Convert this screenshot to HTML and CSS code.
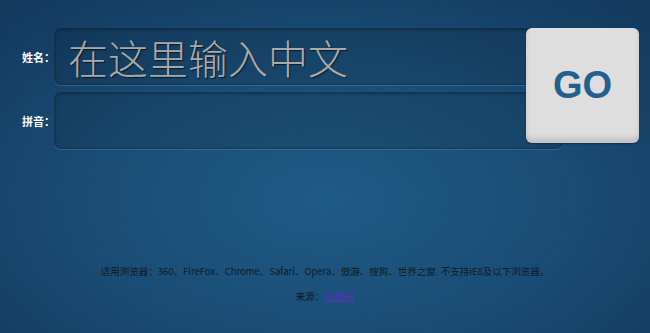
FILE: index.html
```html
<!DOCTYPE html>
<html lang="zh-CN">
<head>
<meta charset="utf-8">
<title>汉字转拼音</title>
<link rel="stylesheet" href="styles.css">
</head>
<body>
<div class="form">
  <div class="fields">
    <div class="row">
      <label class="label" for="cn">姓名：</label>
      <input class="field" id="cn" type="text" placeholder="在这里输入中文">
    </div>
    <div class="row">
      <label class="label" for="py">拼音：</label>
      <input class="field" id="py" type="text">
    </div>
  </div>
  <button class="go" type="button">GO</button>
</div>
<div class="footer">
  <p>适用浏览器：360、FireFox、Chrome、Safari、Opera、傲游、搜狗、世界之窗. 不支持IE8及以下浏览器。</p>
  <p>来源：<a class="src" href="#">A5源码</a></p>
</div>
</body>
</html>
```

FILE: styles.css
```css
html, body {
  margin: 0;
  padding: 0;
  width: 650px;
  height: 333px;
  overflow: hidden;
}
body {
  background: radial-gradient(ellipse 520px 300px at 50% 60%, #1f5a85 0%, #1a4d76 45%, #143d63 80%, #11365a 100%);
  font-family: "Noto Sans CJK SC", "Liberation Sans", sans-serif;
}
.form {
  display: flex;
  align-items: flex-start;
  padding-top: 28px;
}
.fields {
  display: flex;
  flex-direction: column;
  gap: 7px;
}
.row {
  display: flex;
  align-items: center;
}
.label {
  box-sizing: border-box;
  flex: none;
  width: 54px;
  padding-left: 22px;
  color: #ffffff;
  font-size: 11px;
  font-weight: bold;
  line-height: 14px;
  white-space: nowrap;
}
.field {
  box-sizing: border-box;
  width: 509px;
  height: 57px;
  margin: 0;
  padding: 0 13px;
  border: 1px solid rgba(0, 0, 0, 0.22);
  border-radius: 7px;
  background: rgba(0, 0, 0, 0.1);
  box-shadow: inset 0 1px 3px rgba(0, 0, 0, 0.3), 0 1px 0 rgba(255, 255, 255, 0.14);
  color: #b0b0b0;
  font-family: "Noto Sans CJK SC", serif;
  font-weight: 300;
  font-size: 40px;
  outline: none;
}
.field::placeholder {
  color: #a9a9a9;
  text-shadow: 1px 1px 1px rgba(0, 0, 0, 0.6);
  opacity: 1;
}
.go {
  box-sizing: border-box;
  width: 113px;
  height: 115px;
  margin-left: -37px;
  padding: 0;
  border: none;
  border-radius: 6px;
  background: #dedede;
  box-shadow: inset 0 -5px 5px rgba(0, 0, 0, 0.12), 0 1px 2px rgba(0, 0, 0, 0.3);
  color: #23608f;
  font-family: "Liberation Sans", Arial, sans-serif;
  font-weight: bold;
  font-size: 38px;
  line-height: 115px;
  cursor: pointer;
}
.footer {
  margin-top: 113px;
  text-align: center;
  color: #0e1a26;
  font-size: 9.5px;
}
.footer p {
  margin: 0 0 7px;
  line-height: 18px;
}
.src {
  color: #5b2fc0;
  text-decoration: underline;
}
```
